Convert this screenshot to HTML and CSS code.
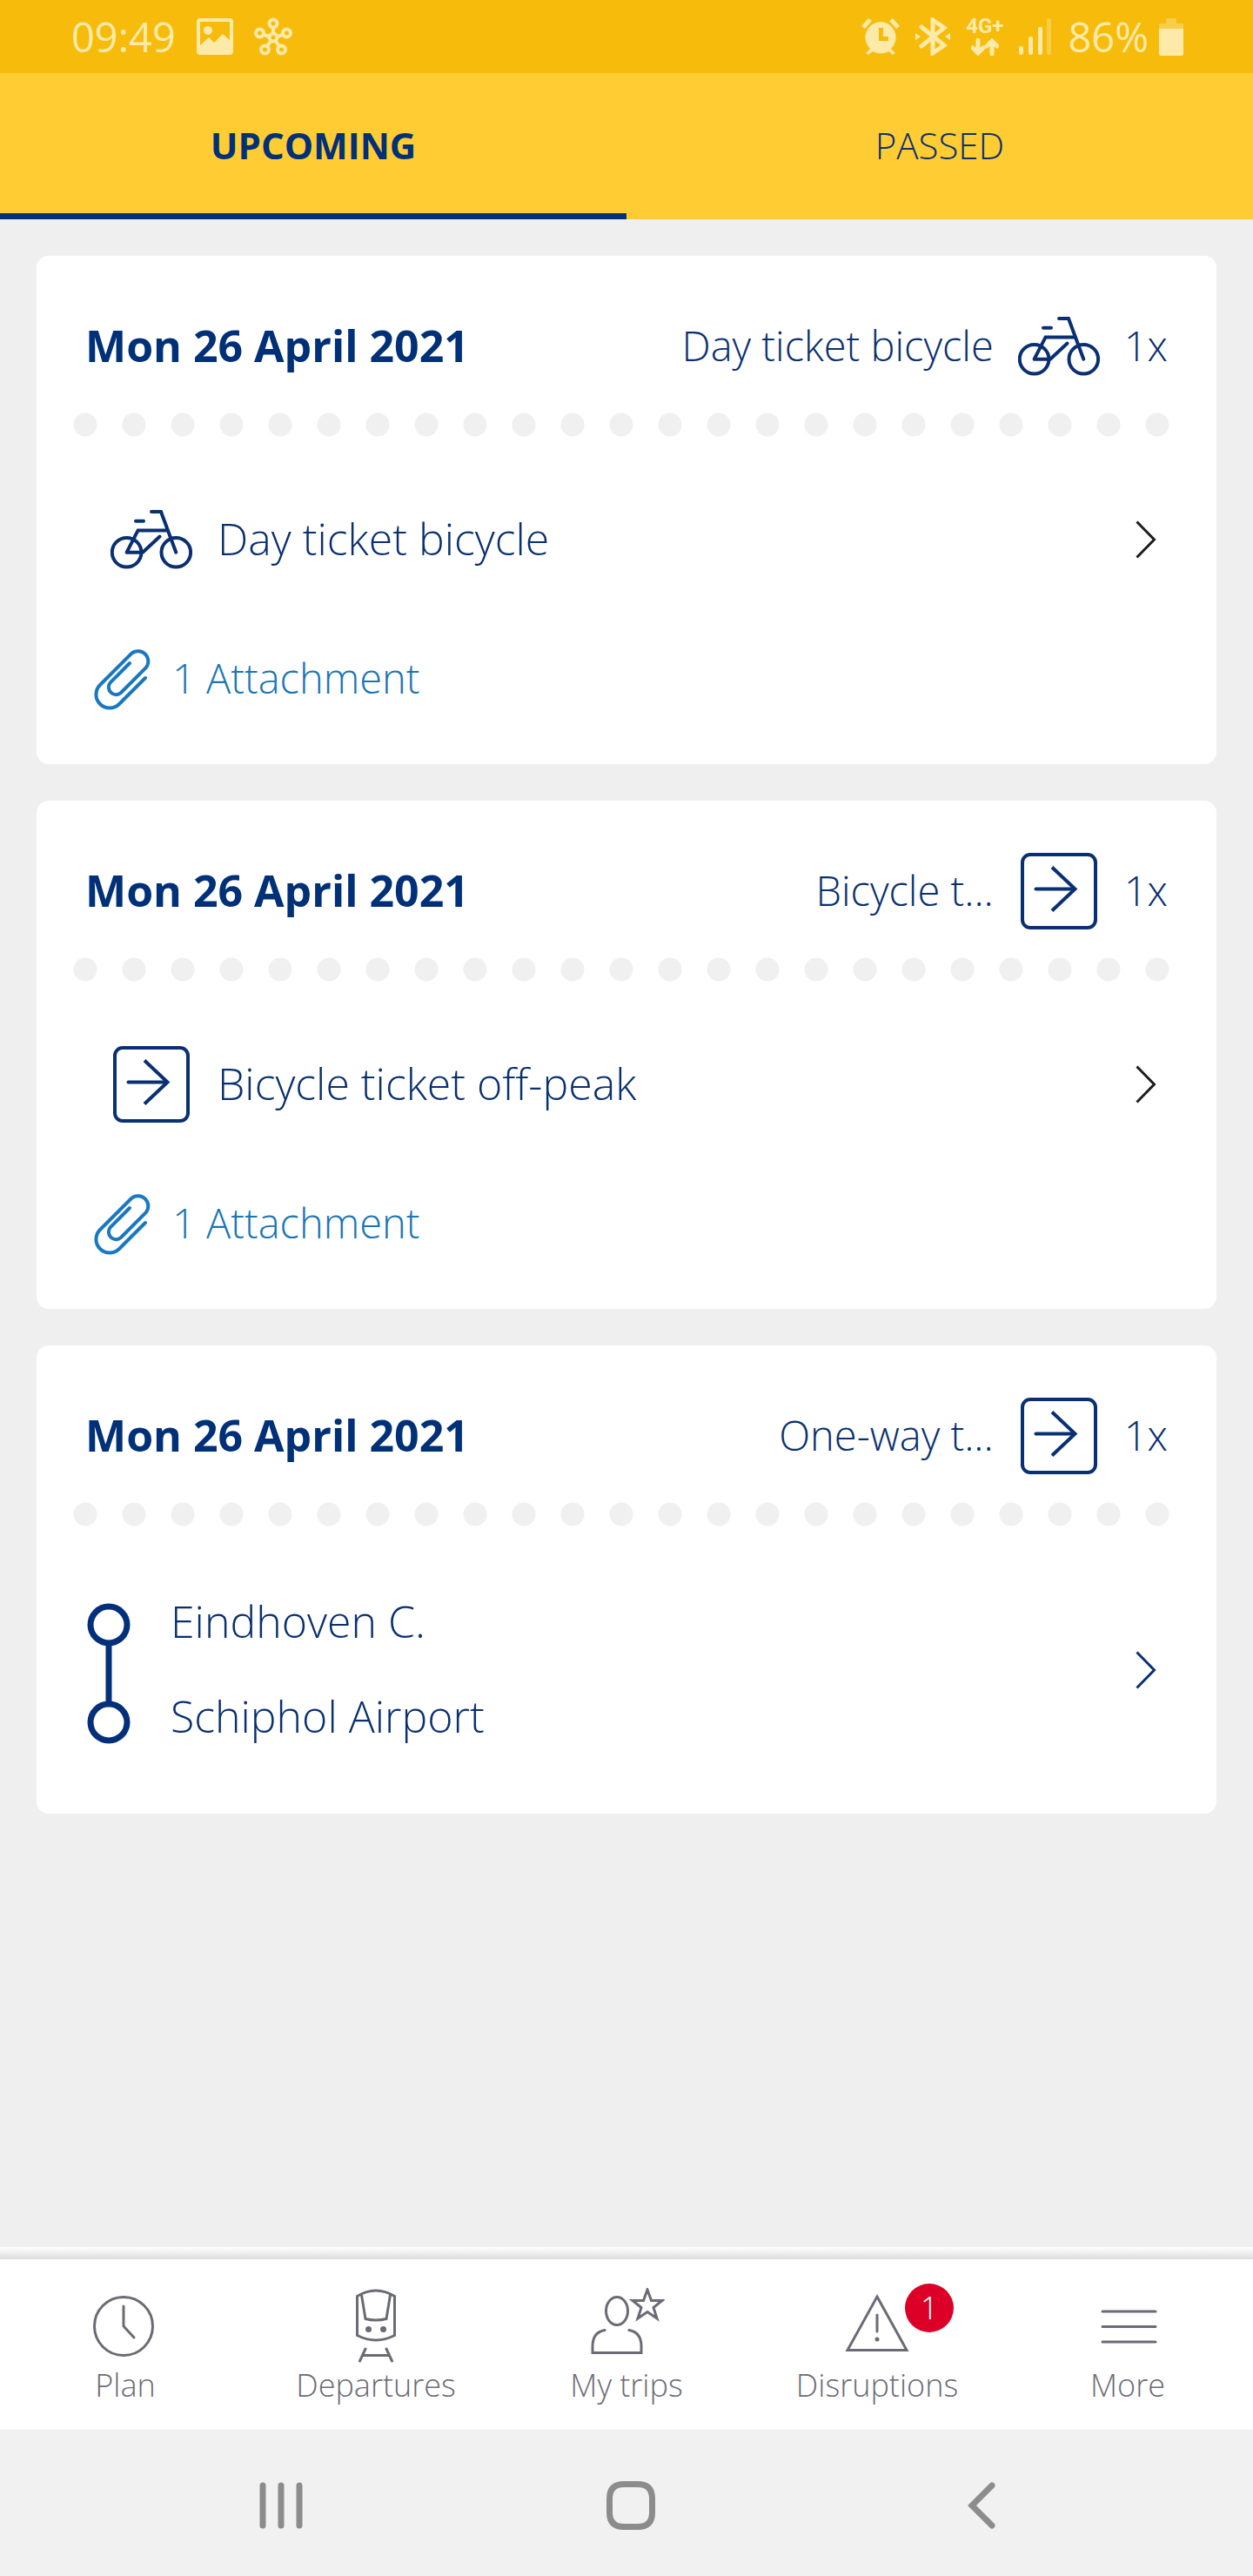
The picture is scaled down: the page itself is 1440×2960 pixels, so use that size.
FILE: index.html
```html
<!DOCTYPE html>
<html lang="en">
<head>
<meta charset="utf-8">
<meta name="viewport" content="width=device-width, initial-scale=1">
<title>My trips</title>
<link rel="stylesheet" href="styles.css">
</head>
<body>
<svg class="sprite" aria-hidden="true">
  <symbol id="bike" viewBox="0 0 94 68">
    <circle cx="18.6" cy="48.7" r="16.8"/><circle cx="75.3" cy="48.7" r="16.8"/>
    <path d="M47 2H58L75.3 48.7M29 12.8H38M18.6 48.7L31.6 23.4H65M18.6 48.7H37L56.6 30.5"/>
  </symbol>
  <symbol id="oneway" viewBox="0 0 94 88">
    <rect x="5" y="2" width="84" height="84" rx="9"/>
    <path d="M20.500 41.500H64.500"/><path d="M39 16.500L65.500 41.500L39 66.500" stroke-linecap="butt"/>
  </symbol>
  <symbol id="clip" viewBox="0 0 66 71">
    <path d="M59 34L29 64A15.500 15.500 0 0 1 7 42L43 6A11.700 11.700 0 0 1 59.500 22.500L31 51A8.500 8.500 0 0 1 19 39L41 17"/>
  </symbol>
  <symbol id="chevron" viewBox="0 0 24 44"><path d="M1.500 1.500L21.500 22L1.500 42.500"/></symbol>
</svg>

<div class="app">
  <div class="status">
    <div class="status-group">
      <span class="status-text">09:49</span>
      <svg class="fill" width="42" height="42" viewBox="0 0 42 42"><path fill-rule="evenodd" d="M4 0H38Q42 0 42 4V38Q42 42 38 42H4Q0 42 0 38V4Q0 0 4 0ZM4 4V31L14 22L20 28L30 18L38 25V4ZM13 9A5 5 0 1 1 12.900 9Z"/></svg>
      <svg class="line hub" width="44" height="44" viewBox="0 0 44 44"><circle cx="22" cy="23" r="4.500"/><circle cx="22" cy="7" r="4.500"/><circle cx="6.500" cy="18" r="4.500"/><circle cx="37.500" cy="18" r="4.500"/><circle cx="12.500" cy="37" r="4.500"/><circle cx="31.500" cy="37" r="4.500"/><path d="M22 12V18M11 20L17.500 22M33 20L26.500 22M15 33L19.500 27M29 33L24.500 27"/></svg>
    </div>
    <div class="status-group right">
      <svg class="fill" width="44" height="42" viewBox="0 0 44 42"><path fill-rule="evenodd" d="M22 4A18 18 0 0 1 34 35L39 40L36 42L31 38A18 18 0 0 1 13 38L8 42L5 40L10 35A18 18 0 0 1 22 4ZM20 11V26H31V21H25V11Z"/><path d="M0 9L8 0L12 3L4 12ZM44 9L36 0L32 3L40 12Z"/></svg>
      <svg class="line bt" width="40" height="44" viewBox="0 0 40 44"><path d="M7 11L33 32L20 41V3L33 12L7 33"/><path class="solid" d="M0 18L6 22L0 26ZM40 18L34 22L40 26Z"/></svg>
      <span class="network">4G+
        <svg class="line" width="32" height="20" viewBox="0 0 32 20"><path d="M8 2V17M2 11L8 17L14 11M24 18V4M18 9L24 3L30 9"/></svg>
      </span>
      <svg class="fill" width="38" height="42" viewBox="0 0 38 42"><rect y="32" width="5" height="10" rx="2"/><rect x="11" y="21" width="5" height="21" rx="2"/><rect x="22" y="10" width="5" height="32" rx="2"/><rect x="32" width="5" height="42" rx="2" opacity=".4"/></svg>
      <span class="battery"><span class="status-text">86%</span>
        <svg class="fill" width="28" height="43" viewBox="0 0 28 43"><path opacity=".4" d="M8 0H20V6H28V12H0V6H8Z"/><path d="M0 12H28V41Q28 43 26 43H2Q0 43 0 41Z"/></svg>
      </span>
    </div>
  </div>

  <div class="tabs" role="tablist">
    <button class="tab active" role="tab" aria-selected="true">UPCOMING</button>
    <button class="tab" role="tab" aria-selected="false">PASSED</button>
  </div>

  <main class="list">
    <article class="card">
      <header class="card-head">
        <h2>Mon 26 April 2021</h2>
        <span class="kind">Day ticket bicycle</span>
        <svg class="icon" width="94" height="68"><use href="#bike"/></svg>
        <span>1x</span>
      </header>
      <div class="dots"></div>
      <a class="row" href="#">
        <svg class="icon" width="94" height="68"><use href="#bike"/></svg>
        <span>Day ticket bicycle</span>
        <svg class="icon chevron dark" width="24" height="44"><use href="#chevron"/></svg>
      </a>
      <a class="attach" href="#">
        <svg class="icon" width="66" height="71"><use href="#clip"/></svg>
        <span>1 Attachment</span>
      </a>
    </article>

    <article class="card">
      <header class="card-head">
        <h2>Mon 26 April 2021</h2>
        <span class="kind">Bicycle t...</span>
        <svg class="icon" width="94" height="88"><use href="#oneway"/></svg>
        <span>1x</span>
      </header>
      <div class="dots"></div>
      <a class="row" href="#">
        <svg class="icon" width="94" height="88"><use href="#oneway"/></svg>
        <span>Bicycle ticket off-peak</span>
        <svg class="icon chevron dark" width="24" height="44"><use href="#chevron"/></svg>
      </a>
      <a class="attach" href="#">
        <svg class="icon" width="66" height="71"><use href="#clip"/></svg>
        <span>1 Attachment</span>
      </a>
    </article>

    <article class="card">
      <header class="card-head">
        <h2>Mon 26 April 2021</h2>
        <span class="kind">One-way t...</span>
        <svg class="icon" width="94" height="88"><use href="#oneway"/></svg>
        <span>1x</span>
      </header>
      <div class="dots"></div>
      <a class="route" href="#">
        <svg class="icon stops" width="50" height="170" viewBox="0 0 50 170"><circle cx="25" cy="33" r="21"/><circle cx="25" cy="145" r="21"/><path d="M25 56V124"/></svg>
        <span class="stations"><span>Eindhoven C.</span><span>Schiphol Airport</span></span>
        <svg class="icon chevron" width="24" height="44"><use href="#chevron"/></svg>
      </a>
    </article>
  </main>

  <nav class="bottom">
    <a href="#"><svg width="88" height="88" viewBox="0 0 88 88"><circle cx="42" cy="44" r="33.500"/><path d="M42 21V44L54 57"/></svg>Plan</a>
    <a href="#"><svg width="88" height="88" viewBox="0 0 88 88"><path d="M22.500 9.500Q44 -3.500 65.500 9.500V54.500Q44 65.500 22.500 54.500ZM27.500 8L32 35.500Q44 38.500 56 35.500L60.500 8M32 70L25.500 84M56 70L62.500 84M29.500 77.500H58.500"/><circle class="solid" cx="35.500" cy="47.500" r="3.500"/><circle class="solid" cx="52.500" cy="47.500" r="3.500"/></svg>Departures</a>
    <a href="#"><svg width="88" height="88" viewBox="0 0 88 88"><ellipse cx="33" cy="26.500" rx="12.500" ry="16"/><path d="M19 48.500Q5 51 5 67V74.500H61V67Q61 51 47 48.500M68 2L72.500 14.500H85L75 22.500L79 35L68 27.500L57 35L61 22.500L51 14.500H63.500Z"/></svg>My trips</a>
    <a href="#"><svg width="88" height="88" viewBox="0 0 88 88"><path d="M44 10L78 71.500H10ZM44 31V50"/><circle class="solid" cx="44" cy="59" r="2.500"/></svg><b class="badge">1</b>Disruptions</a>
    <a href="#"><svg width="88" height="88" viewBox="0 0 88 88"><path d="M15 27H76M15 44.500H76M15 62H76"/></svg>More</a>
  </nav>

  <div class="system">
    <button aria-label="Recent apps"><svg width="50" height="56" viewBox="0 0 50 56"><path d="M4 5V51M25 5V51M46 5V51"/></svg></button>
    <button aria-label="Home"><svg width="56" height="56" viewBox="0 0 56 56"><path d="M20 3.500H36Q52.500 3.500 52.500 20V36Q52.500 52.500 36 52.500H20Q3.500 52.500 3.500 36V20Q3.500 3.500 20 3.500Z"/></svg></button>
    <button aria-label="Back"><svg width="32" height="56" viewBox="0 0 32 56"><path d="M28 5L5 28L28 51"/></svg></button>
  </div>
</div>
</body>
</html>
```

FILE: styles.css
```css
* { box-sizing: border-box; }
body {
  margin: 0;
  background: #efefef;
  color: #0a306f;
  font-family: "Open Sans", "Noto Sans", sans-serif;
  font-weight: 300;
}
a { color: inherit; text-decoration: none; }
button { border: 0; background: none; font: inherit; color: inherit; padding: 0; }
svg { display: block; flex: none; fill: none; stroke-linecap: round; }
.sprite { position: absolute; width: 0; height: 0; }
.app { display: flex; flex-direction: column; min-height: 100vh; }

.status {
  display: flex;
  justify-content: space-between;
  height: 84px;
  padding: 0 80px 0 82px;
  background: #f6bb0b;
  color: #fdeaa8;
}
.status-group { display: flex; align-items: center; gap: 24px; }
.status-group.right { gap: 18px; }
.status-text { font-size: 47px; line-height: 60px; font-weight: 400; }
.battery { display: flex; align-items: center; gap: 12px; }
.status .fill { fill: currentColor; }
.status .line { stroke: currentColor; stroke-width: 4; }
.status .bt, .status .network .line { stroke-width: 5; }
.status .solid { fill: currentColor; stroke: none; }
.network {
  display: flex;
  flex-direction: column;
  align-items: center;
  gap: 4px;
  font: 700 24px/20px Roboto, sans-serif;
}

.tabs { display: flex; height: 168px; background: #ffcc33; }
.tab { flex: 1; padding-bottom: 4px; border-bottom: 7px solid transparent; border-top: 7px solid transparent; font-size: 42px; }
.tab.active { border-bottom-color: #04307b; font-weight: 700; color: #003078; }

.list { flex: 1; display: flex; flex-direction: column; gap: 42px; padding: 42px; }
.card { background: #fff; border-radius: 14px; padding: 48px 42px 0; }
.card-head {
  display: flex;
  align-items: center;
  gap: 28px;
  height: 112px;
  padding: 0 14px;
  font-size: 47px;
}
.card-head h2 { flex: 1; margin: 0; font-size: 50px; font-weight: 700; color: #003078; }
.card-head h2, .card-head span, .row span, .attach span { padding-bottom: 3px; }
.icon { stroke: #0a3072; stroke-width: 4; }
.dots {
  height: 28px;
  margin-top: 20px;
  background: radial-gradient(circle at 14px 14px, #f0f0f0 13px, transparent 14px) repeat-x 0 0 / 56px 28px;
}
.row { display: flex; align-items: center; gap: 29px; height: 112px; margin-top: 62px; padding: 0 27px 0 43px; font-size: 50px; }
.chevron { margin-left: auto; stroke-linecap: butt; stroke-width: 3; }
.chevron.dark { stroke: #1c1c1c; }
.attach { display: flex; align-items: center; gap: 24px; height: 80px; margin: 64px 0 58px; padding: 0 24px; font-size: 47px; color: #1a75b5; }
.attach .icon { stroke: #1a78c0; }
.route { display: flex; align-items: center; gap: 46px; height: 218px; margin: 56px 0; padding: 0 27px 0 16px; font-size: 50px; }
.stops { stroke: #04307b; stroke-width: 7; stroke-linecap: butt; }
.stations { display: flex; flex-direction: column; padding-bottom: 3px; line-height: 109px; }

.bottom {
  display: grid;
  grid-template-columns: repeat(5, 1fr);
  background: linear-gradient(#fff, #ddd) top / 100% 14px no-repeat #fff;
  color: #6b6b76;
  font-size: 36px;
  line-height: 48px;
}
.bottom a { position: relative; display: flex; flex-direction: column; align-items: center; padding: 47px 0 27px; }
.bottom svg { stroke: #6b6b76; stroke-width: 3; }
.bottom .solid { fill: #6b6b76; stroke: none; }
.badge {
  position: absolute;
  top: 42px;
  left: calc(50% + 32px);
  width: 56px;
  height: 56px;
  border-radius: 50%;
  background: #dc0028;
  color: #fff;
  font-weight: 300;
  line-height: 56px;
  text-align: center;
}
.system {
  display: grid;
  grid-template-columns: repeat(3, 1fr);
  height: 168px;
  padding: 6px 111px 0 122px;
  background: #f1f1f1;
}
.system button { display: flex; align-items: center; justify-content: center; }
.system svg { stroke: #8c8c8c; stroke-width: 7; }
```
